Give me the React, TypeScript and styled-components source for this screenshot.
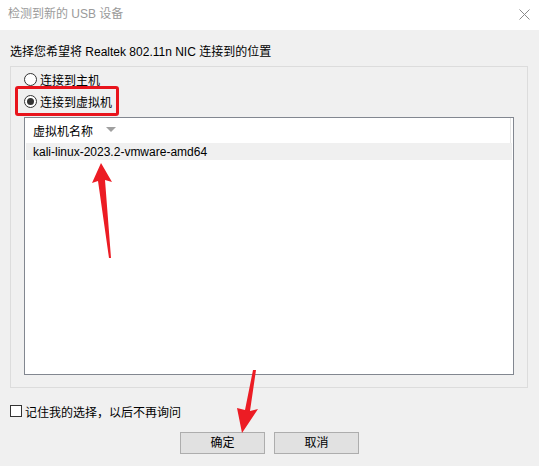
import React from "react";
import styled, { createGlobalStyle } from "styled-components";

const Global = createGlobalStyle`
  html, body { margin: 0; padding: 0; background: #f0f0f0; }
  body { font-family: "Liberation Sans", "Noto Sans CJK SC", sans-serif; }
`;

const Window = styled.div`
  position: relative;
  width: 539px;
  height: 466px;
  background: #f0f0f0;
  overflow: hidden;
  font-family: "Liberation Sans", "Noto Sans CJK SC", sans-serif;
  font-size: 12px;
  color: #000;
`;

const TitleBar = styled.div`
  height: 30px;
  background: #fff;
  display: flex;
  align-items: center;
  justify-content: space-between;
  padding: 0 9px 2px 8px;
  box-sizing: border-box;
`;

const Title = styled.span`
  color: #9a9a9a;
  font-size: 12px;
  line-height: 16px;
`;

const Body = styled.div`
  padding: 14px 11px 0 10px;
  display: flex;
  flex-direction: column;
`;

const Prompt = styled.div`
  line-height: 16px;
`;

const GroupBox = styled.div`
  margin-top: 6px;
  height: 322px;
  box-sizing: border-box;
  border: 1px solid #dcdcdc;
  padding: 4px 13px 12px 13px;
  display: flex;
  flex-direction: column;
`;

const RadioRow = styled.label<{ $highlight?: boolean }>`
  position: relative;
  display: flex;
  align-items: center;
  gap: 3px;
  height: 16px;
  margin-bottom: 6px;
  align-self: flex-start;
  ${(p) =>
    p.$highlight &&
    `
    &::after {
      content: "";
      position: absolute;
      left: -9px;
      right: -7px;
      top: -7px;
      bottom: -7px;
      border: 3px solid #e8141c;
      border-radius: 3px;
    }
  `}
`;

const RadioCircle = styled.span<{ $checked?: boolean }>`
  width: 13px;
  height: 13px;
  box-sizing: border-box;
  border-radius: 50%;
  border: 1px solid #333;
  background: #fff;
  display: flex;
  align-items: center;
  justify-content: center;
  &::before {
    content: "";
    width: 7px;
    height: 7px;
    border-radius: 50%;
    background: ${(p) => (p.$checked ? "#333" : "transparent")};
  }
`;

const ListBox = styled.div`
  margin-top: 2px;
  flex: 1;
  border: 1px solid #828790;
  background: #fff;
  display: flex;
  flex-direction: column;
  padding: 0 1px;
`;

const HeaderRow = styled.div`
  height: 25px;
  display: flex;
  align-items: center;
  padding-left: 7px;
  border-right: 1px solid #e5e5e5;
  margin-right: 1px;
  background: #fff;
  gap: 13px;
`;

const SortArrow = styled.span`
  width: 0;
  height: 0;
  border-left: 5px solid transparent;
  border-right: 5px solid transparent;
  border-top: 5px solid #a0a0a0;
  margin-top: -3px;
`;

const ItemRow = styled.div<{ $selected?: boolean }>`
  height: 17px;
  display: flex;
  align-items: center;
  padding-left: 7px;
  background: ${(p) => (p.$selected ? "#f0f0f0" : "#fff")};
  line-height: 16px;
`;

const CheckRow = styled.label`
  margin-top: 16px;
  display: flex;
  align-items: center;
  gap: 3px;
  height: 14px;
`;

const CheckBox = styled.span`
  width: 12px;
  height: 12px;
  box-sizing: border-box;
  border: 1px solid #333;
  background: #fff;
`;

const ButtonRow = styled.div`
  margin-top: 14px;
  display: flex;
  justify-content: center;
  gap: 9px;
  padding-left: 1px;
`;

const Button = styled.button`
  width: 85px;
  height: 22px;
  box-sizing: border-box;
  background: #e1e1e1;
  border: 1px solid #adadad;
  font-family: inherit;
  font-size: 12px;
  color: #000;
  padding: 0;
  line-height: 18px;
`;

const Overlay = styled.svg`
  position: absolute;
  left: 0;
  top: 0;
  pointer-events: none;
`;

export default function App() {
  return (
    <>
      <Global />
      <Window>
        <TitleBar>
          <Title>检测到新的 USB 设备</Title>
          <svg width="11" height="11" viewBox="0 0 11 11">
            <path d="M0.5 0.5 L10.5 10.5 M10.5 0.5 L0.5 10.5" stroke="#8a8a8a" strokeWidth="1" fill="none" />
          </svg>
        </TitleBar>
        <Body>
          <Prompt>选择您希望将 Realtek 802.11n NIC 连接到的位置</Prompt>
          <GroupBox>
            <RadioRow>
              <RadioCircle />
              <span>连接到主机</span>
            </RadioRow>
            <RadioRow $highlight>
              <RadioCircle $checked />
              <span>连接到虚拟机</span>
            </RadioRow>
            <ListBox>
              <HeaderRow>
                <span>虚拟机名称</span>
                <SortArrow />
              </HeaderRow>
              <ItemRow $selected>kali-linux-2023.2-vmware-amd64</ItemRow>
            </ListBox>
          </GroupBox>
          <CheckRow>
            <CheckBox />
            <span>记住我的选择，以后不再询问</span>
          </CheckRow>
          <ButtonRow>
            <Button>确定</Button>
            <Button>取消</Button>
          </ButtonRow>
        </Body>
        <Overlay width="539" height="466" viewBox="0 0 539 466">
          <polygon
            points="101,163 112,182 105,180 111,258 109,258 98,181 92,183"
            fill="#ec1c24"
          />
          <polygon
            points="256,370 250,411 258,409 242,433 237,408 245,410 253,370"
            fill="#ec1c24"
          />
        </Overlay>
      </Window>
    </>
  );
}
